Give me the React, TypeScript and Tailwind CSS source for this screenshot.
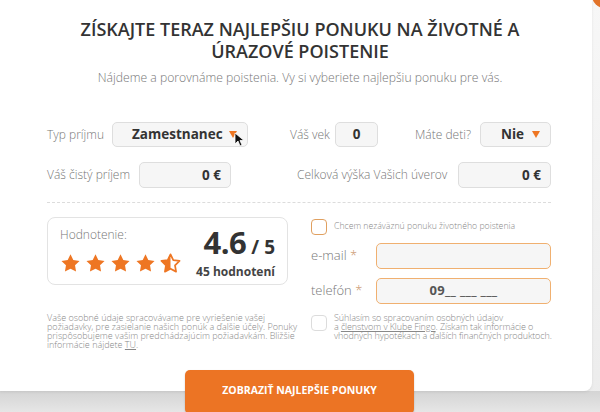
import React from "react";

const STAR = "M12 1.5l3.2 6.6 7.2 1-5.2 5.1 1.2 7.2L12 18l-6.4 3.4 1.2-7.2L1.6 9.1l7.2-1z";

function Star({ half = false }: { half?: boolean }) {
  return (
    <svg width="21" height="20" viewBox="0 0 24 23">
      {half ? (
        <>
          <defs>
            <clipPath id="lh">
              <rect x="0" y="0" width="12" height="24" />
            </clipPath>
          </defs>
          <path d={STAR} fill="none" stroke="#ee7623" strokeWidth="2" strokeLinejoin="round" />
          <path d={STAR} fill="#ee7623" clipPath="url(#lh)" />
        </>
      ) : (
        <path d={STAR} fill="#ee7623" />
      )}
    </svg>
  );
}

function Tri() {
  return (
    <svg width="8" height="7" viewBox="0 0 8 7" className="flex-none">
      <path d="M0 0h8L4 7z" fill="#ee7623" />
    </svg>
  );
}

export default function App() {
  return (
    <div
      className="relative w-[600px] h-[412px] overflow-hidden bg-gradient-to-b from-[#f7f7f7] to-[#ececec]"
      style={{ fontFamily: '"Open Sans", "Liberation Sans", sans-serif' }}
    >
      <div className="absolute right-[-17px] top-[-17px] w-[25px] h-[25px] rounded-full bg-[#e2742a]" />
      <div className="flex flex-col">
        <div className="relative w-[592px] h-[391px] bg-white rounded-br-[8px] shadow-[0_1px_3px_rgba(0,0,0,0.08)]">
          <div className="w-[600px] flex flex-col">
            <h1 className="pt-[18px] text-center text-[18px] leading-[22px] font-semibold text-[#333]">
              ZÍSKAJTE TERAZ NAJLEPŠIU PONUKU NA ŽIVOTNÉ A<br />ÚRAZOVÉ POISTENIE
            </h1>
            <p className="mt-[7px] text-center text-[12.2px] leading-[17px] font-light text-[#777]">
              Nájdeme a porovnáme poistenia. Vy si vyberiete najlepšiu ponuku pre vás.
            </p>

            {/* Row 1 */}
            <div className="mt-[36px] pl-[47px] flex items-center text-[12px] font-light text-[#777] whitespace-nowrap">
              <span className="w-[65px] flex-none">Typ príjmu</span>
              <div className="relative flex-none w-[136px] h-[25px] rounded-[5px] border border-[#dedede] bg-[#f6f6f6] flex items-center pl-[19px] pr-[10px]">
                <span className="flex-1 text-[13.5px] font-bold text-[#333]">Zamestnanec</span>
                <Tri />
                <svg className="absolute left-[121px] top-[9px]" width="10" height="15" viewBox="0 0 10 15">
                  <path d="M1 1v11l3-3 2 5 2-1-2-4.5h4z" fill="#111" stroke="#fff" strokeWidth="0.8" />
                </svg>
              </div>
              <span className="ml-[42px] w-[45px] flex-none">Váš vek</span>
              <div className="flex-none w-[43px] h-[25px] rounded-[5px] border border-[#dedede] bg-[#f6f6f6] flex items-center justify-center text-[13.5px] font-bold text-[#333]">
                0
              </div>
              <span className="ml-[37px] w-[65px] flex-none">Máte deti?</span>
              <div className="flex-none w-[71px] h-[25px] rounded-[5px] border border-[#dedede] bg-[#f6f6f6] flex items-center pl-[20px] pr-[10px]">
                <span className="flex-1 text-[13.5px] font-bold text-[#333]">Nie</span>
                <Tri />
              </div>
            </div>

            {/* Row 2 */}
            <div className="mt-[15px] pl-[47px] flex items-center text-[12px] font-light text-[#777] whitespace-nowrap">
              <span className="w-[92px] flex-none">Váš čistý príjem</span>
              <div className="flex-none w-[92px] h-[26px] rounded-[5px] border border-[#dedede] bg-[#f6f6f6] flex items-center justify-end pr-[9px] text-[13.5px] font-bold text-[#333]">
                0 €
              </div>
              <span className="ml-[66px] w-[161px] flex-none">Celková výška Vašich úverov</span>
              <div className="flex-none w-[93px] h-[26px] rounded-[5px] border border-[#dedede] bg-[#f6f6f6] flex items-center justify-end pr-[9px] text-[13.5px] font-bold text-[#333]">
                0 €
              </div>
            </div>

            <div className="mt-[14px] ml-[47px] w-[504px] border-t border-dashed border-[#dcdcdc]" />

            {/* Rating + contact */}
            <div className="mt-[14px] pl-[47px] flex">
              <div className="flex-none w-[241px] h-[68px] rounded-[8px] border border-[#e3e3e3] flex items-start pl-[12px] pr-[12px] pt-[9px]">
                <div className="flex flex-col">
                  <span className="text-[12px] leading-[16px] font-light text-[#777]">Hodnotenie:</span>
                  <div className="mt-[10px] flex gap-[4px]">
                    <Star />
                    <Star />
                    <Star />
                    <Star />
                    <Star half />
                  </div>
                </div>
                <div className="ml-auto flex flex-col items-end">
                  <div className="flex items-baseline leading-none text-[#333] font-bold">
                    <span className="text-[31px] tracking-[-0.5px]">4.6</span>
                    <span className="ml-[5px] text-[19px]">/ 5</span>
                  </div>
                  <span className="mt-[7px] text-[12px] leading-[14px] font-bold text-[#444]">45 hodnotení</span>
                </div>
              </div>

              <div className="ml-[23px] w-[240px] flex flex-col">
                <div className="mt-[2px] flex items-center whitespace-nowrap">
                  <div className="flex-none w-[16px] h-[16px] rounded-[4px] border border-[#e0a060]" />
                  <span className="ml-[7px] text-[8.7px] font-light text-[#888]">
                    Chcem nezáväznú ponuku životného poistenia
                  </span>
                </div>
                <div className="mt-[8px] flex items-center">
                  <span className="w-[65px] flex-none text-[13px] font-light text-[#777] whitespace-nowrap">
                    e-mail <span className="text-[#c9956b]">*</span>
                  </span>
                  <div className="flex-none w-[175px] h-[26px] rounded-[5px] border border-[#f0b070] bg-[#f6f6f6]" />
                </div>
                <div className="mt-[9px] flex items-center">
                  <span className="w-[65px] flex-none text-[13px] font-light text-[#777] whitespace-nowrap">
                    telefón <span className="text-[#c9956b]">*</span>
                  </span>
                  <div className="flex-none w-[175px] h-[26px] rounded-[5px] border border-[#f0b070] bg-[#f6f6f6] flex items-center justify-center text-[13px] font-bold text-[#555] tracking-[0.3px]">
                    09__ ___ ___
                  </div>
                </div>
              </div>
            </div>

            {/* Bottom texts */}
            <div className="mt-[9px] pl-[47px] flex">
              <p className="flex-none w-[241px] text-[9px] leading-[9px] font-light text-[#888] whitespace-nowrap">
                Vaše osobné údaje spracovávame pre vyriešenie vašej
                <br />
                požiadavky, pre zasielanie našich ponúk a ďalšie účely. Ponuky
                <br />
                prispôsobujeme vašim predchádzajúcim požiadavkám. Bližšie
                <br />
                informácie nájdete <span className="underline">TU</span>.
              </p>
              <div className="ml-[23px] flex items-start">
                <div className="flex-none mt-[2px] w-[16px] h-[16px] rounded-[4px] border border-[#dcdcdc]" />
                <p className="ml-[7px] text-[9px] leading-[9px] font-light text-[#888] whitespace-nowrap tracking-[-0.1px]">
                  Súhlasím so spracovaním osobných údajov
                  <br />a <span className="underline">členstvom v Klube Fingo</span>. Získam tak informácie o
                  <br />
                  vhodných hypotékach a ďalších finančných produktoch.
                </p>
              </div>
            </div>
          </div>
          <button className="absolute left-[185px] top-[370px] w-[229px] h-[44px] rounded-[5px] bg-[#ec7424] text-white text-[10.5px] leading-[14px] font-bold flex justify-center items-start pt-[13px] shadow-[0_1px_2px_rgba(0,0,0,0.2)]">
            ZOBRAZIŤ NAJLEPŠIE PONUKY
          </button>
        </div>
        <div className="h-[21px] bg-gradient-to-b from-[#d4d4d4] to-[#e6e6e6]" />
      </div>
    </div>
  );
}
